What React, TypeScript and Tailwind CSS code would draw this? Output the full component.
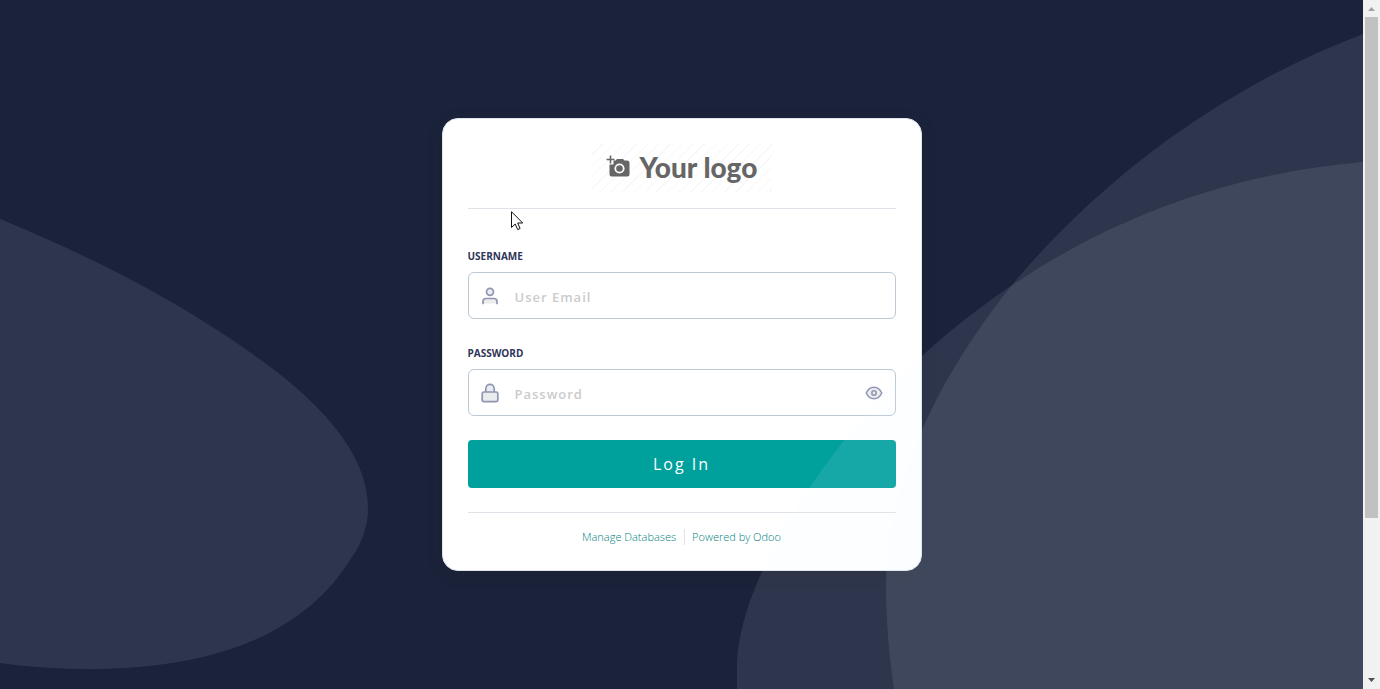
import { useState } from "react";
import type { ReactNode } from "react";

function BackgroundShapes() {
  return (
    <svg
      className="pointer-events-none absolute inset-0 h-full w-full"
      viewBox="0 0 1363 689"
      preserveAspectRatio="none"
      aria-hidden="true"
    >
      <g fill="#e6f5ff" fillOpacity="0.095">
        <path d="M0 219C100 260 196 310 277 372C335 417 368 463 368 508C368 527 362 543 350 560C310 624 231 669 88 669C58 669 29 667 0 663Z" />
        <path d="M1363 162C1200 176 1050 240 922 356C846 424 737 570 737 668V689H1363Z" />
        <path d="M1363 34C1231 84 1110 170 1016 280C936 378 886 486 886 585C886 620 889 656 894 689H1363Z" />
      </g>
    </svg>
  );
}

function CameraIcon() {
  return (
    <svg width="24" height="24" viewBox="0 0 24 24" aria-hidden="true">
      <path
        fill="#666"
        d="M3.500 9.500H7.500V5.500H9.600L11 4H17L18.500 5.500H21Q23.500 5.500 23.500 8V19.500Q23.500 21.500 21.500 21.500H5.500Q3.500 21.500 3.500 19.500Z"
      />
      <circle cx="13.500" cy="13.500" r="4.200" fill="#666" stroke="#fff" strokeWidth="1.800" />
      <path d="M4.500 0.500V8.500M0.500 4.500H8.500" stroke="#666" strokeWidth="1.600" />
    </svg>
  );
}

function Logo() {
  return (
    <div className="flex h-12 w-[180px] items-center justify-center gap-[10px] bg-[repeating-linear-gradient(135deg,#fff_0px,#fff_7px,#f7f7f7_7px,#f7f7f7_8px)] pb-0.5 font-['Lato',sans-serif] text-[28px] leading-8 font-black text-[#666]">
      <CameraIcon />
      <span>Your logo</span>
    </div>
  );
}

function UserIcon() {
  return (
    <svg width="18" height="20" viewBox="0 0 18 20" stroke="#8f95b2" strokeWidth="1.700" fill="#ebecee" aria-hidden="true">
      <circle cx="9" cy="5.800" r="3.500" />
      <path d="M2 17.500V15.500Q2 12.500 5 12.500H13Q16 12.500 16 15.500V17.500" strokeLinecap="round" />
    </svg>
  );
}

function LockIcon() {
  return (
    <svg width="18" height="20" viewBox="0 0 18 20" stroke="#8f95b2" strokeWidth="1.700" fill="#ebecee" aria-hidden="true">
      <path d="M4.800 9V5.500A4.200 4.200 0 0 1 13.200 5.500V9" />
      <rect x="1.200" y="9" width="15.600" height="9.600" rx="1.600" />
    </svg>
  );
}

function EyeIcon() {
  return (
    <svg width="18" height="14" viewBox="0 0 18 14" stroke="#8f95b2" strokeWidth="1.500" fill="#ebecee" aria-hidden="true">
      <path d="M1.200 7C3 3.200 5.700 1.200 9 1.200S15 3.200 16.800 7C15 10.800 12.300 12.800 9 12.800S3 10.800 1.200 7Z" strokeLinejoin="round" />
      <circle cx="9" cy="7" r="2.200" />
    </svg>
  );
}

type FieldProps = {
  id: string;
  label: string;
  placeholder: string;
  type: string;
  icon: ReactNode;
  action?: ReactNode;
};

function Field({ id, label, placeholder, type, icon, action }: FieldProps) {
  return (
    <div className="flex flex-col gap-2">
      <label htmlFor={id} className="text-[10px] leading-4 font-bold text-[#2f3559] uppercase">
        {label}
      </label>
      <div className="flex h-[47px] items-center rounded-md border border-[#bcc8d4] px-3">
        {icon}
        <input
          id={id}
          type={type}
          placeholder={placeholder}
          className="ml-4 min-w-0 flex-1 bg-transparent pt-0.5 text-[13px] leading-5 font-semibold tracking-[1px] text-[#2f3559] outline-none placeholder:text-[#cbcbcb]"
        />
        {action}
      </div>
    </div>
  );
}

function Scrollbar() {
  return (
    <div className="flex w-[17px] shrink-0 flex-col items-center bg-[#f1f1f1]" aria-hidden="true">
      <svg width="17" height="17" viewBox="0 0 17 17">
        <path d="M5 11L8.500 7L12 11Z" fill="#a3a3a3" />
      </svg>
      <div className="flex w-[13px] flex-1 flex-col">
        <div className="h-[76.5%] bg-[#c1c1c1]" />
      </div>
      <svg width="17" height="17" viewBox="0 0 17 17">
        <path d="M5 6L8.500 10L12 6Z" fill="#505050" />
      </svg>
    </div>
  );
}

function Pointer() {
  return (
    <svg className="pointer-events-none absolute top-[92px] left-[68px]" width="13" height="20" viewBox="0 0 13 20" aria-hidden="true">
      <path d="M0.500 0.700V16.500L4.200 13L6.700 18.600L9.100 17.500L6.700 12H11.700Z" fill="#fff" stroke="#111" strokeWidth="1" />
    </svg>
  );
}

export default function App() {
  const [visible, setVisible] = useState(false);

  return (
    <div className="flex min-h-screen bg-[#1b233b] font-['Open_Sans','Noto_Sans',sans-serif]">
      <main className="relative flex flex-1 items-center justify-center overflow-hidden">
        <div className="relative w-[480px] rounded-2xl border border-[#dee5ee] bg-white p-[25px] shadow-[0_4px_14px_rgba(30,30,30,0.25)]">
          <header className="flex justify-center border-b border-[#dfe2e8] pb-4">
            <Logo />
          </header>
          <form className="pt-[39px]" onSubmit={(event) => event.preventDefault()}>
            <div className="flex flex-col gap-[26px]">
              <Field id="login" label="Username" placeholder="User Email" type="text" icon={<UserIcon />} />
              <Field
                id="password"
                label="Password"
                placeholder="Password"
                type={visible ? "text" : "password"}
                icon={<LockIcon />}
                action={
                  <button type="button" aria-label="Show password" onClick={() => setVisible(!visible)}>
                    <EyeIcon />
                  </button>
                }
              />
            </div>
            <button
              type="submit"
              className="mt-6 flex h-12 w-full items-center justify-center rounded bg-[#00a09d] text-base tracking-[2px] text-white"
            >
              Log In
            </button>
          </form>
          <footer className="mt-6 flex justify-center border-t border-[#dfe2e8] pt-4 text-[11px] leading-4 font-light text-[#007f7c]">
            <a href="#databases" className="border-r border-[#dfe2e8] pr-2">
              Manage Databases
            </a>
            <a href="#odoo" className="pl-[7px]">
              Powered by Odoo
            </a>
          </footer>
          <Pointer />
        </div>
        <BackgroundShapes />
      </main>
      <Scrollbar />
    </div>
  );
}
